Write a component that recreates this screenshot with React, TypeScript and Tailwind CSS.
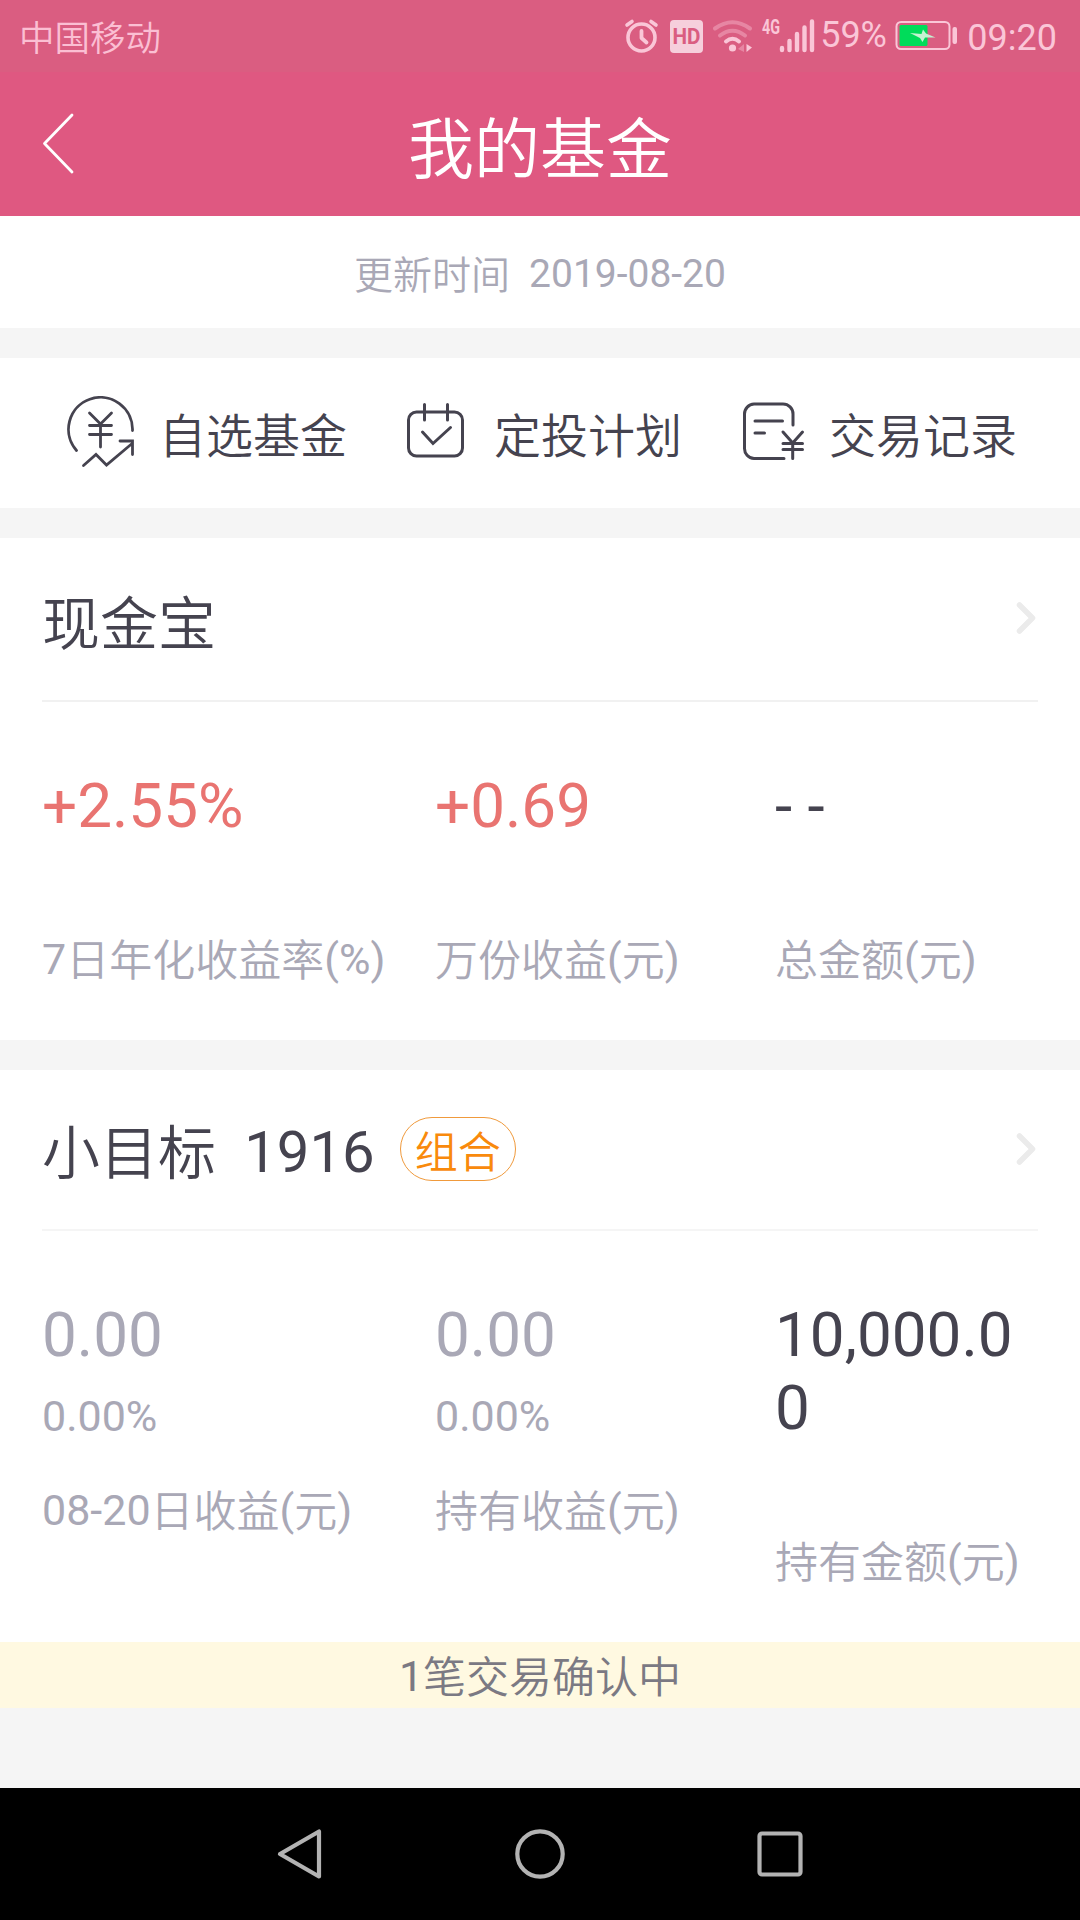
import React from "react";

const shortcuts = [
  { icon: "fund", title: "自选基金", className: "ml-[67px] w-[339px]", gap: "ml-[25px]" },
  { icon: "plan", title: "定投计划", className: "w-[336px]", gap: "ml-[30px]" },
  { icon: "record", title: "交易记录", className: "", gap: "ml-[24px]" },
];

const ShortcutIcon = ({ name }: { name: string }) => {
  if (name === "fund") {
    return (
      <svg width="67" height="72" viewBox="0 0 67 72" fill="none" stroke="#45434f" strokeWidth="2.8" strokeLinecap="round" className="mb-[3px] shrink-0">
        <path d="M9.5 54.5A32 32 0 1 1 65.5 34.5" />
        <path d="M22.5 17L33.5 28L44.5 17M22.5 29.5H44.5M22.5 38.5H44.5M33.5 28V51" />
        <path d="M16.5 69.5L29 58.500L39.5 69L64.5 48M53 45H65.5V58.5" />
      </svg>
    );
  }
  if (name === "plan") {
    return (
      <svg width="58" height="72" viewBox="0 0 58 72" fill="none" stroke="#45434f" strokeWidth="3" strokeLinecap="round" className="mb-[3px] shrink-0">
        <rect x="2.500" y="16" width="54" height="44" rx="8" />
        <path d="M18.500 8.5V24M41.500 8.5V24" />
        <path d="M16.500 36L27 47.5L44.500 31.5" />
      </svg>
    );
  }
  return (
    <svg width="63" height="72" viewBox="0 0 63 72" fill="none" stroke="#45434f" strokeWidth="3" strokeLinecap="round" className="mb-[3px] shrink-0">
      <path d="M51 29V18A10 10 0 0 0 41 8H12A10 10 0 0 0 2.500 18V52A10 10 0 0 0 12 62.500H42" />
      <path d="M13 25H40.500M13 37H22.500" />
      <path d="M41 36L50.700 47L60.500 36M41 47.500H60.500M41 53.500H60.500M50.700 47V62.500" />
    </svg>
  );
};

const Chevron = () => (
  <svg className="mr-[2px] mb-[2px]" width="20" height="34" viewBox="0 0 20 34" fill="none" stroke="#ebebeb" strokeWidth="5.500" strokeLinecap="round" strokeLinejoin="round">
    <path d="M3.500 4L16.500 17L3.500 30" />
  </svg>
);

// chinese glyphs are lighter and sit slightly below the latin baseline
const Cn = ({ children }: { children: React.ReactNode }) => (
  <span className="align-[-2px] font-[350]">{children}</span>
);

const StatusBar = () => (
  <div className="flex h-[72px] items-start bg-[#da5d81] text-[#fac6d7]">
    <span className="ml-[19px] mt-[13px] text-[35.5px] leading-[52px] font-[350] text-[#fbbfd3]">中国移动</span>
    <svg className="ml-auto mt-[12px]" width="192" height="44" viewBox="0 -6 192 44" fill="none">
      {/* alarm */}
      <g stroke="#fac6d7" strokeLinecap="round" strokeLinejoin="round">
        <circle cx="18.500" cy="19.500" r="13.500" strokeWidth="3.600" />
        <path d="M18.500 13V20L23.500 24.500" strokeWidth="3.800" />
        <path d="M4 7L9 3.500M33 7L28 3.500" strokeWidth="3.600" />
      </g>
      {/* hd */}
      <rect x="47" y="2" width="33" height="33" rx="4" fill="#f6cfdc" />
      <text x="63.500" y="26" textAnchor="middle" textLength="28" lengthAdjust="spacingAndGlyphs" fontFamily="Roboto" fontWeight="700" fontSize="22" fill="#da5d81">HD</text>
      {/* wifi */}
      <g stroke="#fac6d7" strokeWidth="4" strokeLinecap="round">
        <path d="M92 10.500Q109.500 -2 127 10.500" opacity=".4" />
        <path d="M97 17.500Q109.500 8 122 17.500" opacity=".4" />
        <path d="M103 23.500Q109.500 18 116 23.500" />
      </g>
      <circle cx="109.500" cy="30" r="3.600" fill="#fac6d7" />
      <path d="M121 26V34L115 31Z" fill="#fac6d7" opacity=".4" />
      <path d="M123.500 26V34L129 29.500Z" fill="#fac6d7" />
      {/* signal */}
      <text x="139" y="15.500" textLength="18" lengthAdjust="spacingAndGlyphs" fontFamily="Roboto" fontWeight="700" fontSize="20" fill="#fac6d7">4G</text>
      <g stroke="#fac6d7" strokeWidth="4.400" strokeLinecap="round">
        <path d="M159 30V32M166.500 23V32M174 16V32M181.500 9.500V32M189 3.500V32" />
      </g>
    </svg>
    <span className="ml-[5px] mt-[9px] w-[75px] text-[36px] leading-[52px] tracking-[-0.2px]">59%</span>
    <svg className="mt-[20px]" width="63" height="31" viewBox="0 0 63 31" fill="none">
      <rect x="1.500" y="2" width="53" height="27" rx="4.500" stroke="#fac6d7" strokeWidth="2" />
      <rect x="4.500" y="5" width="28" height="21" rx="1.500" fill="#00dc5a" />
      <path d="M15 13L26.500 14L28 9.500L31 13.500L40.500 17.500L30 17.500L27.500 22L25 18Z" fill="#c4f3d2" />
      <rect x="57.500" y="7" width="4.500" height="17" rx="2" fill="#fac6d7" />
    </svg>
    <span className="ml-[9px] mr-[23px] mt-[12px] text-[36px] leading-[52px]">09:20</span>
  </div>
);

const MyFund = () => {
  return (
    <main className="flex h-[1920px] w-[1080px] flex-col overflow-hidden bg-[#f5f5f5] font-['Roboto','Noto_Sans_CJK_SC',sans-serif] text-[#45434f]">
      <StatusBar />
      <header className="flex h-[144px] items-center bg-[#df5881] text-white">
        <svg className="ml-[41px]" width="34" height="62" viewBox="0 0 34 62" fill="none" stroke="white" strokeWidth="2.8" strokeLinecap="round" strokeLinejoin="round">
          <path d="M31 2L3.500 30.500L31 59" />
        </svg>
        <h1 className="flex-1 pr-[75px] pt-[14px] text-center text-[66px] leading-[80px] font-[350]">我的基金</h1>
      </header>

      <section className="h-[112px] bg-white pt-[3px] text-center text-[39px] leading-[110px] whitespace-pre text-[#a9a8b6]">
        <Cn>{"更新时间  "}</Cn>2019-08-20
      </section>

      <section className="mt-[30px] flex h-[150px] items-center bg-white">
        {shortcuts.map((item) => (
          <div key={item.icon} className={`flex items-center ${item.className}`}>
            <ShortcutIcon name={item.icon} />
            <span className={`pt-[8px] text-[47px] leading-[60px] font-[350] ${item.gap}`}>{item.title}</span>
          </div>
        ))}
      </section>

      <section className="mt-[30px] h-[502px] bg-white px-[42px]">
        <div className="flex h-[164px] items-center justify-between border-b-2 border-[#f1f1f1]">
          <h2 className="pt-[12px] text-[58px] leading-[70px] font-[350]">现金宝</h2>
          <Chevron />
        </div>
        <div className="grid grid-cols-[393px_340px_263px] pt-[68px] text-[43px] leading-[50px] text-[#a9a8b6]">
          <div>
            <p className="text-[62px] leading-[72px] text-[#e97471]">+2.55%</p>
            <p className="mt-[92px]">7<Cn>日年化收益率</Cn>(%)</p>
          </div>
          <div>
            <p className="text-[62px] leading-[72px] text-[#e97471]">+0.69</p>
            <p className="mt-[92px]"><Cn>万份收益</Cn>(<Cn>元</Cn>)</p>
          </div>
          <div>
            <p className="text-[62px] leading-[72px] text-[#45434f]">- -</p>
            <p className="mt-[92px]"><Cn>总金额</Cn>(<Cn>元</Cn>)</p>
          </div>
        </div>
      </section>

      <section className="mt-[30px] h-[572px] bg-white px-[42px]">
        <div className="flex h-[161px] items-center border-b-2 border-[#f5f5f5]">
          <h2 className="pt-[6px] text-[58px] leading-[70px] whitespace-pre">
            <Cn>{"小目标  "}</Cn>1916
          </h2>
          <span className="mb-[2px] ml-[25px] h-[64px] w-[116px] rounded-full border border-[#f09a3c] pt-[4px] text-center text-[43px] leading-[62px] font-[350] text-[#f98a0c]">组合</span>
          <div className="ml-auto">
            <Chevron />
          </div>
        </div>
        <div className="grid grid-cols-[393px_340px_263px] pt-[67px] text-[43px] leading-[50px] text-[#a9a8b6]">
          <div>
            <p className="text-[62px] leading-[73px]">0.00</p>
            <p className="mt-[20px]">0.00%</p>
            <p className="mt-[44px]">08-20<Cn>日收益</Cn>(<Cn>元</Cn>)</p>
          </div>
          <div>
            <p className="text-[62px] leading-[73px]">0.00</p>
            <p className="mt-[20px]">0.00%</p>
            <p className="mt-[44px]"><Cn>持有收益</Cn>(<Cn>元</Cn>)</p>
          </div>
          <div>
            <p className="text-[62px] leading-[73px] break-all text-[#45434f]">10,000.00</p>
            <p className="mt-[92px]"><Cn>持有金额</Cn>(<Cn>元</Cn>)</p>
          </div>
        </div>
      </section>

      <div className="h-[66px] bg-[#fff9e1] pt-[3px] text-center text-[43px] leading-[62px] text-[#7b7983]">
        1<Cn>笔交易确认中</Cn>
      </div>

      <nav className="mt-auto flex h-[132px] items-center justify-center gap-[190px] bg-black">
        <svg width="50" height="56" viewBox="0 0 50 56" fill="none" stroke="#b3b3b3" strokeWidth="4.200" strokeLinejoin="round">
          <path d="M44 5.500V50.500L5 28Z" />
        </svg>
        <svg width="50" height="56" viewBox="0 0 50 56" fill="none" stroke="#b3b3b3" strokeWidth="4.200">
          <circle cx="25" cy="28" r="22.700" />
        </svg>
        <svg width="50" height="56" viewBox="0 0 50 56" fill="none" stroke="#b3b3b3" strokeWidth="4.200">
          <rect x="4.500" y="7.500" width="41" height="41" rx="2.500" />
        </svg>
      </nav>
    </main>
  );
};

export default MyFund;
